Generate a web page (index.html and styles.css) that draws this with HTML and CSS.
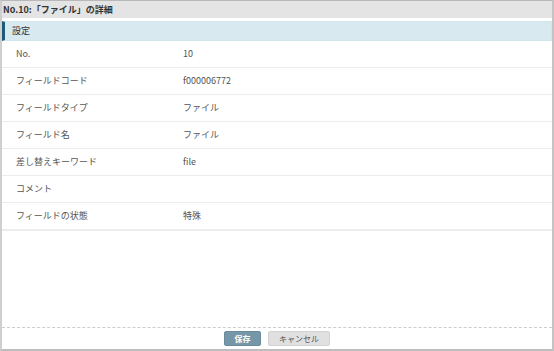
FILE: index.html
```html
<!DOCTYPE html>
<html lang="ja">
<head>
    <meta charset="UTF-8">
    <title>No.10:「ファイル」の詳細</title>
    <link rel="stylesheet" href="styles.css">
</head>
<body>

<div class="dialog">
    <div class="dialog-title">No.10:「ファイル」の詳細</div>

    <div class="dialog-body">
        <div class="section-head">設定</div>
        <div class="row"><span class="label">No.</span><span class="value">10</span></div>
        <div class="row"><span class="label">フィールドコード</span><span class="value">f000006772</span></div>
        <div class="row"><span class="label">フィールドタイプ</span><span class="value">ファイル</span></div>
        <div class="row"><span class="label">フィールド名</span><span class="value">ファイル</span></div>
        <div class="row"><span class="label">差し替えキーワード</span><span class="value">file</span></div>
        <div class="row"><span class="label">コメント</span><span class="value"></span></div>
        <div class="row last"><span class="label">フィールドの状態</span><span class="value">特殊</span></div>
    </div>

    <div class="dialog-footer">
        <button class="btn btn-save">保存</button>
        <button class="btn btn-cancel">キャンセル</button>
    </div>
</div>

</body>
</html>
```

FILE: styles.css
```css
body {
    margin: 0;
    padding: 0;
    background-color: #fff;
    font-family: "Noto Sans CJK JP", "Noto Sans", sans-serif;
    font-size: 9px;
    color: #444;
}
.dialog {
    box-sizing: border-box;
    width: 554px;
    height: 351px;
    display: flex;
    flex-direction: column;
    border: 2px solid #cfcfcf;
    border-top: 1px solid #b8b8b8;
    border-right-color: #c4c4c4;
    border-bottom-color: #bdbdbd;
}
.dialog-title {
    height: 17px;
    line-height: 17px;
    padding-left: 1px;
    background-color: #e4e4e4;
    color: #333;
    font-weight: 600;
}
.dialog-body {
    flex: 1;
    padding-top: 3px;
}
.section-head {
    box-sizing: border-box;
    height: 20px;
    line-height: 18px;
    padding-left: 7px;
    background-color: #d9e9f0;
    border: 1px solid #d0e6ee;
    border-left: 3px solid #1e5b79;
    color: #333;
}
.row {
    display: flex;
    height: 26px;
    line-height: 26px;
    border-bottom: 1px solid #ececec;
}
.row.last {
    border-bottom: 2px solid #ececec;
}
.label {
    width: 167px;
    padding-left: 14px;
    color: #555;
}
.value {
    color: #555;
}
.dialog-footer {
    height: 21px;
    border-top: 1px dashed #cdcdcd;
    display: flex;
    justify-content: center;
    align-items: center;
    gap: 7px;
}
.btn {
    height: 15px;
    padding: 0;
    border-radius: 2px;
    font-family: "Noto Sans CJK JP", sans-serif;
    font-size: 8px;
    line-height: 13px;
    cursor: pointer;
}
.btn-save {
    width: 37px;
    background-color: #7597a7;
    border: 1px solid #6a8b9b;
    color: #fff;
    font-weight: bold;
}
.btn-cancel {
    width: 62px;
    background-color: #e0e0e0;
    border: 1px solid #d2d2d2;
    color: #555;
}
```
